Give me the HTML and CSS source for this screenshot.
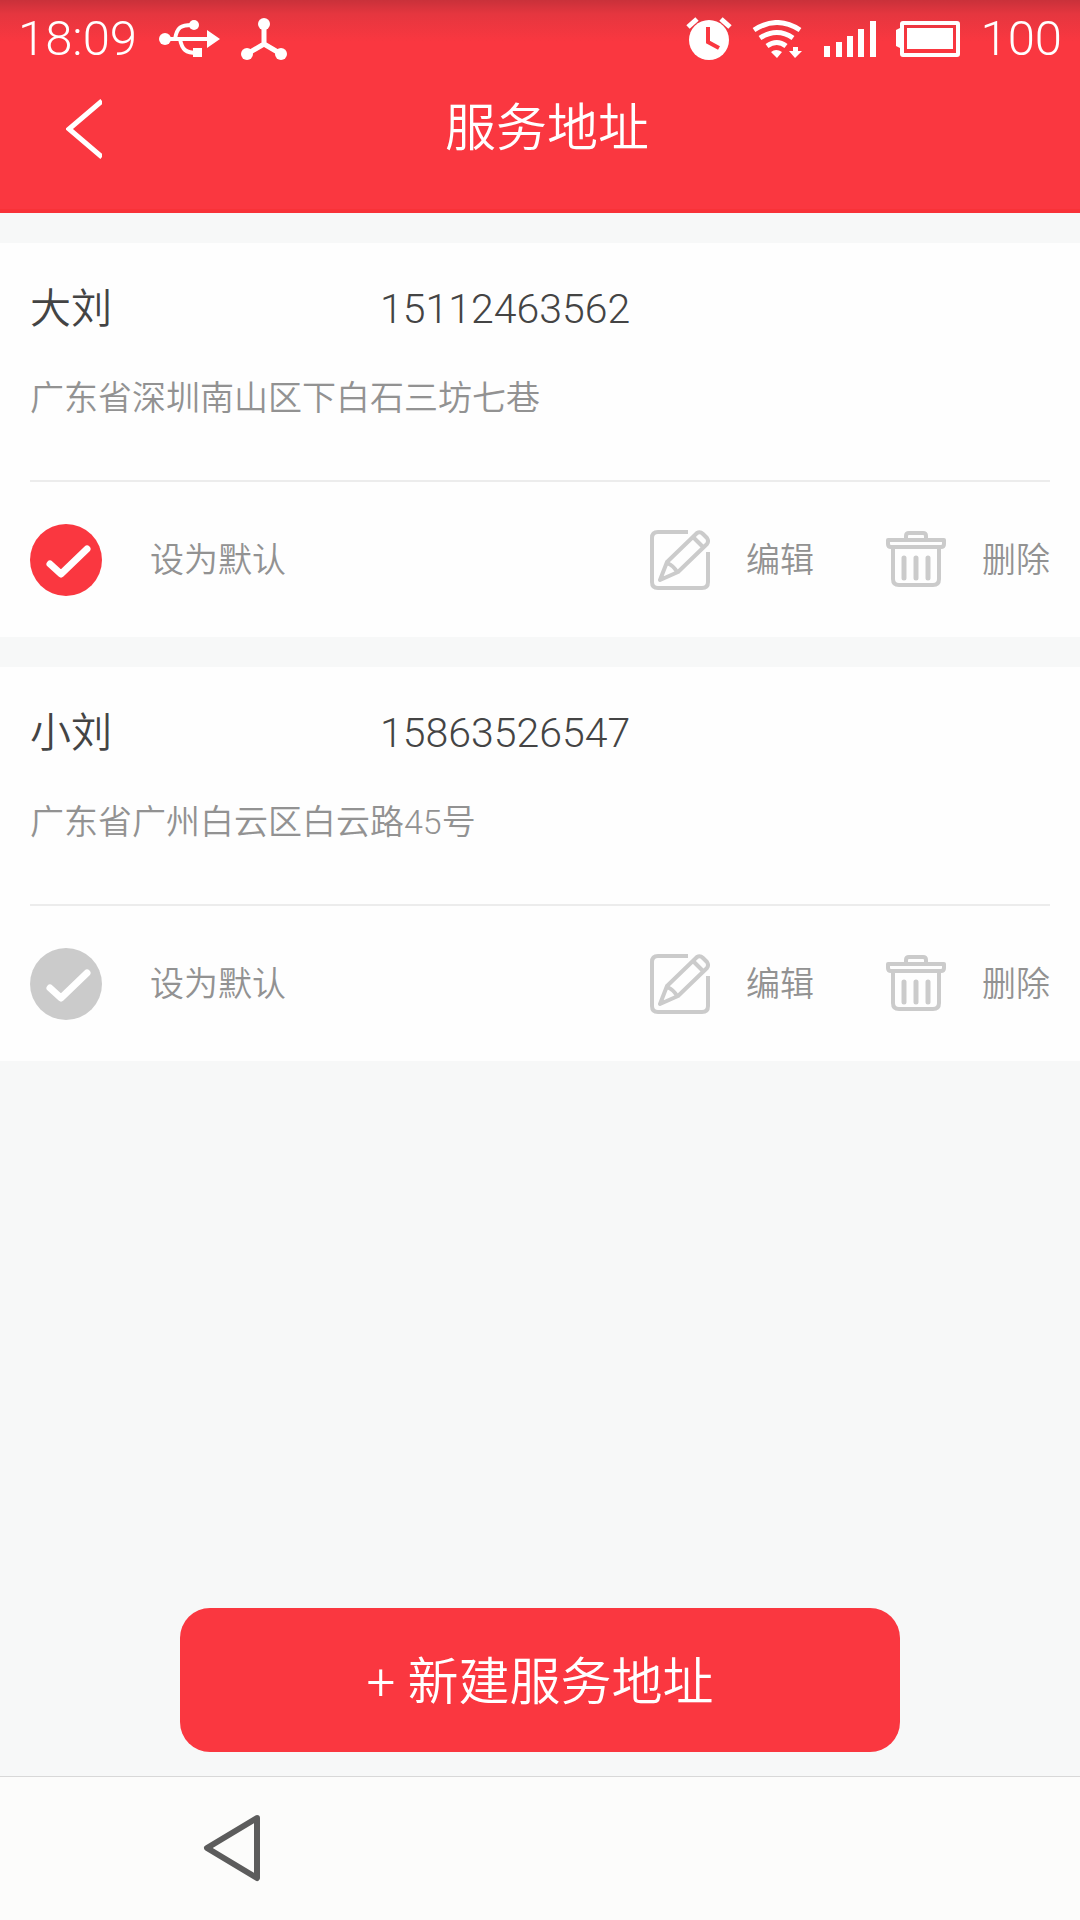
FILE: index.html
```
<!DOCTYPE html>
<html lang="zh-CN">
<head>
<meta charset="utf-8">
<meta name="viewport" content="width=device-width, initial-scale=1">
<title>服务地址</title>
<link rel="stylesheet" href="styles.css">
</head>
<body>
<svg class="sprite" aria-hidden="true">
  <symbol id="icon-check" viewBox="0 0 72 72">
    <path d="M20 40 L31 50 L57 25" fill="none" stroke="#fff" stroke-width="7" stroke-linecap="round" stroke-linejoin="round"/>
  </symbol>
  <symbol id="icon-edit" viewBox="0 0 60 60">
    <g fill="none" stroke="#cbcbcb" stroke-width="4" stroke-linejoin="round">
      <path d="M38 2 H8 Q2 2 2 8 V52 Q2 58 8 58 H52 Q58 58 58 52 V22"/>
      <path d="M10 50 L17 32 L47 3 Q50 1 53 4 L57 8 Q59 11 57 14 L28 42 Z M17 33 Q24 36 27 42 M43 7 L53 17"/>
    </g>
  </symbol>
  <symbol id="icon-trash" viewBox="0 0 60 60">
    <g fill="none" stroke="#cbcbcb" stroke-width="4">
      <path d="M20 9 V6 Q20 3 23 3 H37 Q40 3 40 6 V9"/>
      <path d="M2 10 H58 V14 Q58 17 55 17 H5 Q2 17 2 14 Z" stroke-linejoin="round"/>
      <path d="M7 17 V49 Q7 55 13 55 H47 Q53 55 53 49 V17"/>
      <path d="M18 28 V48 M30 28 V48 M42 28 V48" stroke-width="5" stroke-linecap="round"/>
    </g>
  </symbol>
</svg>

<header class="header">
  <div class="status">
    <span class="status-text">18:09</span>
    <svg class="icon-usb" viewBox="0 0 62 40" width="62" height="40" aria-hidden="true">
      <g fill="none" stroke="#fff" stroke-width="4">
        <path d="M6 20 H50"/>
        <path d="M16 20 C18 8 22 6 33 6 M21 20 C23 31 27 34 38 34"/>
      </g>
      <g fill="#fff">
        <circle cx="6" cy="20" r="6"/><circle cx="35" cy="6" r="5"/>
        <path d="M48 11 L61 20 L48 29 Z M34 29 h9 v9 h-9 z"/>
      </g>
    </svg>
    <svg class="icon-node" viewBox="0 0 46 42" width="46" height="42" aria-hidden="true">
      <path d="M23 6 V26 M6 36 L23 26 L40 36" fill="none" stroke="#fff" stroke-width="5"/>
      <g fill="#fff"><circle cx="23" cy="6" r="6"/><circle cx="6" cy="36" r="6"/><circle cx="40" cy="36" r="6"/></g>
    </svg>
    <span class="status-space"></span>
    <svg class="icon-alarm" viewBox="0 0 46 44" width="46" height="44" aria-hidden="true">
      <circle cx="23" cy="23" r="20" fill="#fff"/>
      <path d="M2 10 L11 2 M44 10 L35 2" stroke="#fff" stroke-width="5" fill="none"/>
      <path d="M22 10 V25 L33 31" stroke="#fa3740" stroke-width="4" fill="none"/>
    </svg>
    <svg class="icon-wifi" viewBox="0 0 50 38" width="50" height="38" aria-hidden="true">
      <g fill="none" stroke="#fff" stroke-width="5">
        <path d="M2 10 Q25 -5 48 10"/><path d="M8 18 Q25 7 41 18"/><path d="M15 26 Q25 19 34 26"/>
      </g>
      <path d="M19 32 Q24 28 30 32 L25 38 Z M41 27 h5 v4 h4 L43 38 L37 31 h4 Z" fill="#fff"/>
    </svg>
    <svg class="icon-signal" viewBox="0 0 52 38" width="52" height="38" aria-hidden="true">
      <path d="M0 26h6v11h-6z M12 22h6v15h-6z M23 16h6v21h-6z M34 9h6v28h-6z M46 1h6v36h-6z" fill="#fff"/>
    </svg>
    <svg class="icon-battery" viewBox="0 0 64 38" width="64" height="38" aria-hidden="true">
      <rect x="6" y="3" width="56" height="32" rx="1" fill="none" stroke="#fff" stroke-width="4"/>
      <path d="M0 10 L4 8 V28 L0 26 Z M11 8 H57 V29 H11 Z" fill="#fff"/>
    </svg>
    <span class="status-text">100</span>
  </div>
  <div class="titlebar">
    <button class="back" type="button" aria-label="返回">
      <svg viewBox="0 0 36 60" width="36" height="60" aria-hidden="true"><path d="M36 2 L3 30 L36 58" fill="none" stroke="#fff" stroke-width="5"/></svg>
    </button>
    <h1 class="title">服务地址</h1>
  </div>
</header>

<main class="main">
  <article class="card">
    <div class="contact"><span class="name">大刘</span><span class="phone">15112463562</span></div>
    <p class="address">广东省深圳南山区下白石三坊七巷</p>
    <div class="actions">
      <label class="default">
        <span class="tick"><input class="radio" type="radio" name="default-address" checked><svg class="mark"><use href="#icon-check"/></svg></span>
        设为默认
      </label>
      <button class="action" type="button"><svg class="action-icon"><use href="#icon-edit"/></svg>编辑</button>
      <button class="action" type="button"><svg class="action-icon"><use href="#icon-trash"/></svg>删除</button>
    </div>
  </article>
  <article class="card">
    <div class="contact"><span class="name">小刘</span><span class="phone">15863526547</span></div>
    <p class="address">广东省广州白云区白云路45号</p>
    <div class="actions">
      <label class="default">
        <span class="tick"><input class="radio" type="radio" name="default-address"><svg class="mark"><use href="#icon-check"/></svg></span>
        设为默认
      </label>
      <button class="action" type="button"><svg class="action-icon"><use href="#icon-edit"/></svg>编辑</button>
      <button class="action" type="button"><svg class="action-icon"><use href="#icon-trash"/></svg>删除</button>
    </div>
  </article>
  <button class="create" type="button">+ 新建服务地址</button>
</main>

<nav class="navbar">
  <button class="nav-back" type="button" aria-label="返回">
    <svg viewBox="0 0 58 68" width="58" height="68" aria-hidden="true"><path d="M54 4 L4 34 L54 64 Z" fill="none" stroke="#5c5c5c" stroke-width="6" stroke-linejoin="round"/></svg>
  </button>
</nav>
</body>
</html>
```
FILE: styles.css
```
* { box-sizing: border-box; }

body {
  margin: 0;
  min-height: 100vh;
  display: flex;
  flex-direction: column;
  background: #f7f8f8;
  color: #444;
  font-family: Roboto, "Noto Sans CJK SC", sans-serif;
  font-weight: 350;
}

button {
  margin: 0;
  padding: 0;
  border: 0;
  background: none;
  color: inherit;
  font: inherit;
  cursor: pointer;
}

svg { display: block; flex: none; }

.sprite { position: absolute; width: 0; height: 0; }

/* Header */
.header {
  height: 213px;
  color: #fff;
  background: linear-gradient(#c9313a 0, #e5363f 14px, #fa3740 42px);
  border-bottom: 4px solid #f83238;
}

.status {
  height: 77px;
  padding: 0 18px;
  display: flex;
  align-items: center;
}

.status-text { font-size: 49px; line-height: 60px; font-weight: 300; }
.status-space { flex: 1; }
.icon-usb { margin-left: 22px; }
.icon-node { margin-left: 20px; }
.icon-wifi { margin-left: 20px; }
.icon-signal { margin-left: 22px; }
.icon-battery { margin: 0 20px; }

.titlebar {
  display: grid;
  grid-template-columns: 134px 1fr 120px;
  align-items: center;
  height: 104px;
}

.back {
  display: flex;
  justify-content: flex-end;
  padding-right: 32px;
}

.title {
  margin: 0;
  font-size: 51px;
  line-height: 60px;
  font-weight: inherit;
  text-align: center;
}

/* Address cards */
.main {
  flex: 1;
  display: flex;
  flex-direction: column;
  gap: 30px;
  padding: 30px 0 24px;
}

.card {
  padding: 36px 30px 0;
  background: #fefefe;
}

.contact {
  display: grid;
  grid-template-columns: 350px 1fr;
  font-size: 41px;
  line-height: 60px;
}

.address {
  margin: 34px 0 0;
  padding-bottom: 57px;
  border-bottom: 2px solid #ececec;
  color: #929292;
  font-size: 34px;
  line-height: 50px;
}

.actions {
  display: flex;
  align-items: center;
  gap: 72px;
  height: 155px;
  color: #929292;
  font-size: 34px;
  line-height: 50px;
}

.default {
  display: flex;
  align-items: center;
  gap: 48px;
  margin-right: auto;
}

.tick { display: grid; }

.radio,
.mark {
  grid-area: 1 / 1;
  width: 72px;
  height: 72px;
}

.radio {
  appearance: none;
  margin: 0;
  border-radius: 50%;
  background: #cbcbcb;
}

.radio:checked { background: #fa3740; }

.mark { pointer-events: none; }

.action {
  display: flex;
  align-items: center;
  gap: 36px;
}

.action-icon { width: 60px; height: 60px; }

.create {
  width: 66.6667%;
  height: 144px;
  margin: auto auto 0;
  padding-top: 6px;
  border-radius: 30px;
  background: #fa3740;
  color: #fff;
  font-size: 51px;
  line-height: 60px;
}

/* System navigation */
.navbar {
  display: flex;
  height: 144px;
  padding: 0 0 2px 203px;
  border-top: 1px solid #d8d8d8;
  background: #fcfcfb;
}
```
